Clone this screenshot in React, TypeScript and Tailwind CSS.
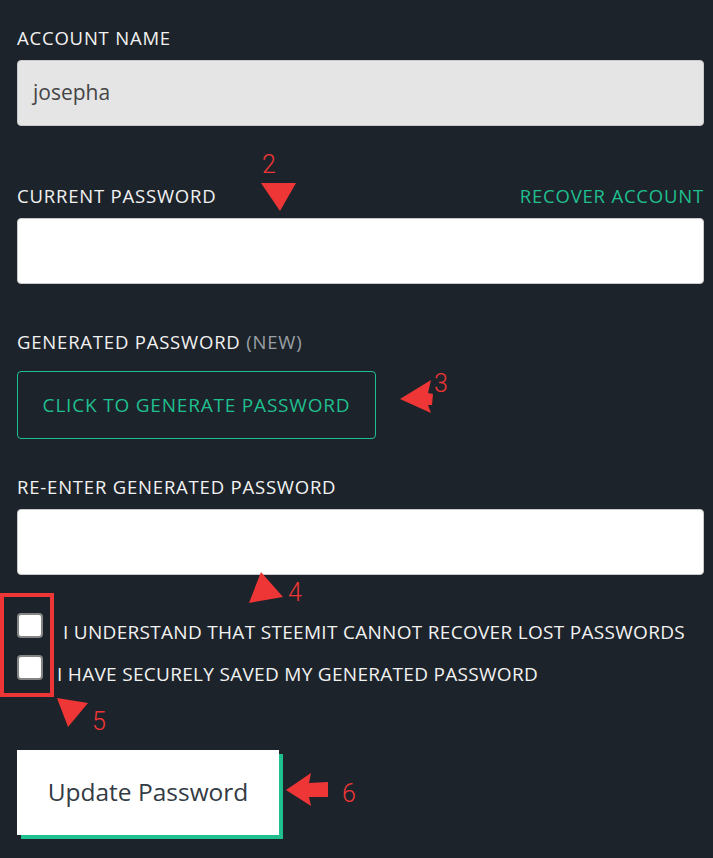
import React from "react";

const font = { fontFamily: "'Open Sans', 'Liberation Sans', sans-serif" };

function Label({ children, right }: { children: React.ReactNode; right?: React.ReactNode }) {
  return (
    <div className="flex items-center justify-between h-6 mb-[10px] text-[18.5px] text-[#f2f2f2] uppercase tracking-[0.8px]">
      <span>{children}</span>
      {right}
    </div>
  );
}

function Annotations() {
  const red = "#ee3636";
  return (
    <svg className="absolute inset-0 pointer-events-none" width="713" height="858" viewBox="0 0 713 858">
      {/* 2 */}
      <text x="262" y="173" fill={red} fontSize="25" fontFamily="Roboto, sans-serif" fontWeight="300">2</text>
      <polygon points="261,183 296,183 280,211" fill={red} />
      {/* 3 */}
      <polygon points="400,399 431,380 428,393 433,394 432,405 428,405 431,413" fill={red} />
      <text x="434" y="392" fill={red} fontSize="25" fontFamily="Roboto, sans-serif" fontWeight="300">3</text>
      {/* 4 */}
      <polygon points="261,572 283,597 249,603" fill={red} />
      <text x="288" y="601" fill={red} fontSize="25" fontFamily="Roboto, sans-serif" fontWeight="300">4</text>
      {/* 5 */}
      <rect x="2" y="595" width="50" height="100" fill="none" stroke={red} strokeWidth="4" />
      <polygon points="57,698 88,703 68,727" fill={red} />
      <text x="92" y="730" fill={red} fontSize="25" fontFamily="Roboto, sans-serif" fontWeight="300">5</text>
      {/* 6 */}
      <polygon points="286,790 311,773 309,783 328,782 328,797 309,797 311,806" fill={red} />
      <text x="342" y="802" fill={red} fontSize="25" fontFamily="Roboto, sans-serif" fontWeight="300">6</text>
    </svg>
  );
}

export default function App() {
  return (
    <div className="relative w-[713px] h-[858px] bg-[#1d232a] overflow-hidden" style={font}>
      <div className="pl-[17px] pr-[9px] pt-[26px]">
        <Label>Account Name</Label>
        <div className="h-[66px] rounded-[4px] bg-[#e5e5e5] border border-[#c9c9c9] flex items-center pl-[15px] text-[21px] text-[#444]">
          josepha
        </div>

        <div className="mt-[58px]">
          <Label right={<span className="text-[#1fbf8f]">Recover Account</span>}>Current Password</Label>
          <div className="h-[66px] rounded-[4px] bg-white border border-[#c9c9c9]" />
        </div>

        <div className="mt-[46px]">
          <Label>
            Generated Password <span className="text-[#9aa0a6]">(new)</span>
          </Label>
          <div className="mt-[17px] w-[359px] h-[68px] rounded-[4px] border border-[#1fbf8f] flex items-center justify-center text-[19px] tracking-[0.8px] text-[#1fbf8f] uppercase">
            Click to generate password
          </div>
        </div>

        <div className="mt-[36px]">
          <Label>Re-enter Generated Password</Label>
          <div className="h-[66px] rounded-[4px] bg-white border border-[#c9c9c9]" />
        </div>

        <div className="mt-[38px] flex flex-col gap-[17px] text-[19px] tracking-[0.3px] text-[#f2f2f2] uppercase">
          <label className="flex items-center h-[25px]">
            <span className="w-[26px] h-[25px] rounded-[4px] bg-white border-2 border-[#858585] shrink-0" />
            <span className="ml-[20px] translate-y-[7px] whitespace-nowrap">I understand that Steemit cannot recover lost passwords</span>
          </label>
          <label className="flex items-center h-[25px]">
            <span className="w-[26px] h-[25px] rounded-[4px] bg-white border-2 border-[#858585] shrink-0" />
            <span className="ml-[14px] translate-y-[7px] whitespace-nowrap">I have securely saved my generated password</span>
          </label>
        </div>

        <button className="mt-[70px] w-[262px] h-[85px] bg-white text-[#333b44] text-[24.5px] shadow-[4px_4px_0_#1fbf8f]">
          Update Password
        </button>
      </div>
      <Annotations />
    </div>
  );
}
